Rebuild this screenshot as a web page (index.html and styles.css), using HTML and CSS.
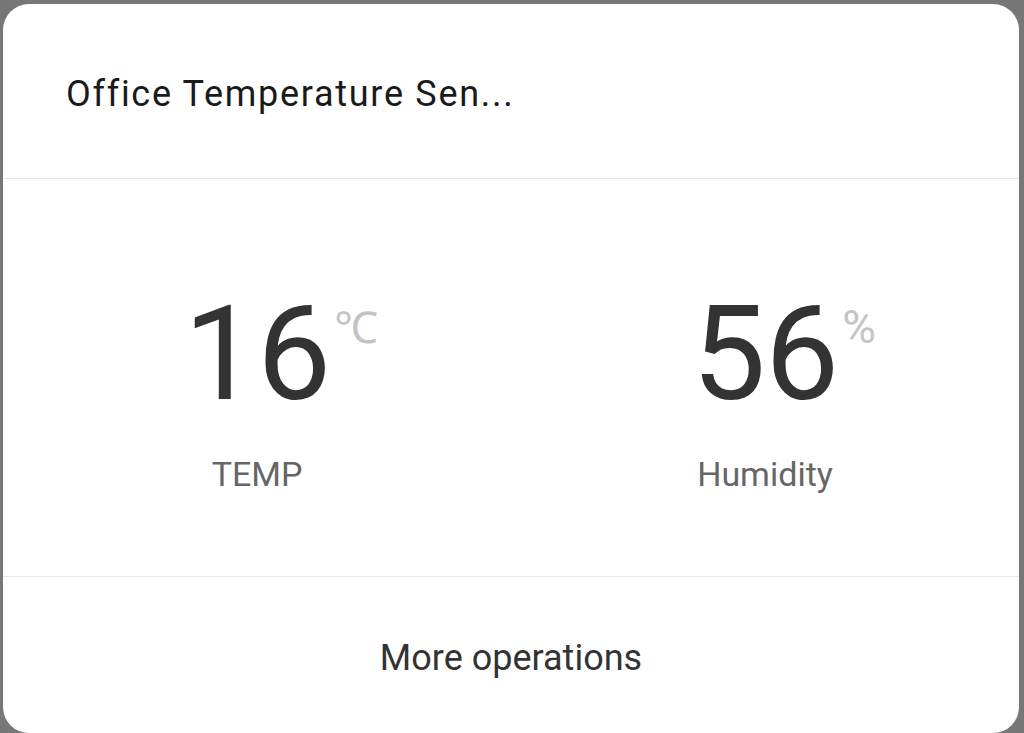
FILE: index.html
```html
<!DOCTYPE html>
<html>
<head>
<meta charset="utf-8">
<link rel="stylesheet" href="styles.css">
</head>
<body>
<div class="card">
  <div class="header">
    <div class="title">Office Temperature Sen...</div>
  </div>
  <div class="readings">
    <div class="reading">
      <div class="value"><span class="num">16</span><span class="unit">℃</span></div>
      <div class="label">TEMP</div>
    </div>
    <div class="reading">
      <div class="value"><span class="num">56</span><span class="unit pct">%</span></div>
      <div class="label">Humidity</div>
    </div>
  </div>
  <div class="footer">More operations</div>
</div>
</body>
</html>
```

FILE: styles.css
```css
html, body {
  margin: 0;
  padding: 0;
}
body {
  width: 1024px;
  height: 733px;
  background: #777777;
  font-family: Roboto, "Noto Sans", sans-serif;
  overflow: hidden;
  padding: 4px 5px 0 3px;
  box-sizing: border-box;
}
.card {
  background: #ffffff;
  border-radius: 26px;
  height: 729px;
  display: flex;
  flex-direction: column;
  overflow: hidden;
}
.header {
  height: 175px;
  border-bottom: 1px solid #e8e8e8;
  box-sizing: border-box;
  display: flex;
  align-items: center;
  padding-left: 63px;
}
.title {
  font-size: 36px;
  letter-spacing: 1.7px;
  color: #1a1a1a;
  margin-top: 6px;
}
.readings {
  height: 398px;
  border-bottom: 1px solid #e8e8e8;
  box-sizing: border-box;
  display: grid;
  grid-template-columns: 1fr 1fr;
}
.reading {
  display: flex;
  flex-direction: column;
  align-items: center;
  padding-top: 109px;
}
.value {
  position: relative;
  line-height: 1;
}
.num {
  font-size: 132px;
  color: #333333;
  letter-spacing: -1px;
}
.unit {
  position: absolute;
  left: 100%;
  top: 18px;
  margin-left: 4px;
  font-size: 44px;
  color: #c4c4c4;
  line-height: 1;
}
.unit.pct {
  font-size: 46px;
  top: 16px;
}
.label {
  margin-top: 34px;
  font-size: 34px;
  color: #666666;
}
.footer {
  flex: 1;
  display: flex;
  align-items: center;
  justify-content: center;
  padding-top: 5px;
  font-size: 36px;
  color: #333333;
}
```
